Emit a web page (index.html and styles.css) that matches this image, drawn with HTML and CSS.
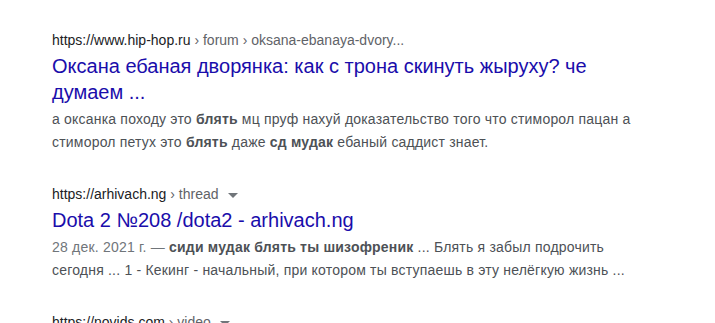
FILE: index.html
```html
<!DOCTYPE html>
<html lang="ru">
<head>
    <meta charset="UTF-8">
    <meta name="viewport" content="width=device-width, initial-scale=1.0">
    <title>Поиск</title>
    <link rel="stylesheet" href="styles.css">
</head>
<body>
    <div class="results">
        <div class="result">
            <div class="cite">https://www.hip-hop.ru <span class="path">› forum › oksana-ebanaya-dvory...</span></div>
            <a class="title" href="#">Оксана ебаная дворянка: как с трона скинуть жыруху? че думаем ...</a>
            <div class="snippet">а оксанка походу это <b>блять</b> мц пруф нахуй доказательство того что стиморол пацан а стиморол петух это <b>блять</b> даже <b>сд мудак</b> ебаный саддист знает.</div>
        </div>

        <div class="result">
            <div class="cite">https://arhivach.ng <span class="path">› thread</span><span class="arrow"></span></div>
            <a class="title" href="#">Dota 2 №208 /dota2 - arhivach.ng</a>
            <div class="snippet"><span class="date">28 дек. 2021 г. — </span><b>сиди мудак блять ты шизофреник</b> ... Блять я забыл подрочить сегодня ... 1 - Кекинг - начальный, при котором ты вступаешь в эту нелёгкую жизнь ...</div>
        </div>

        <div class="result">
            <div class="cite">https://novids.com <span class="path">› video</span><span class="arrow"></span></div>
            <a class="title" href="#">Оксана</a>
        </div>
    </div>
</body>
</html>
```

FILE: styles.css
```css
body {
    margin: 0;
    padding: 0;
    background-color: #fff;
    font-family: "Liberation Sans", Arial, sans-serif;
    overflow: hidden;
}
.results {
    padding: 29px 0 0 52px;
    width: 600px;
}
.result {
    margin-bottom: 29px;
}
.cite {
    font-size: 14px;
    line-height: 22px;
    color: #202124;
    display: flex;
    align-items: center;
    white-space: pre;
}
.cite .path {
    color: #5f6368;
}
.arrow {
    display: inline-block;
    margin-left: 9px;
    margin-top: 2px;
    border-left: 5px solid transparent;
    border-right: 5px solid transparent;
    border-top: 5px solid #70757a;
}
.title {
    display: block;
    margin-top: 2px;
    font-size: 20px;
    line-height: 26px;
    color: #1a0dab;
    text-decoration: none;
}
.snippet {
    margin-top: 3px;
    font-size: 14px;
    line-height: 23px;
    letter-spacing: 0.2px;
    color: #4d5156;
}
.snippet b {
    color: #4d5156;
}
.snippet .date {
    color: #70757a;
}
```
